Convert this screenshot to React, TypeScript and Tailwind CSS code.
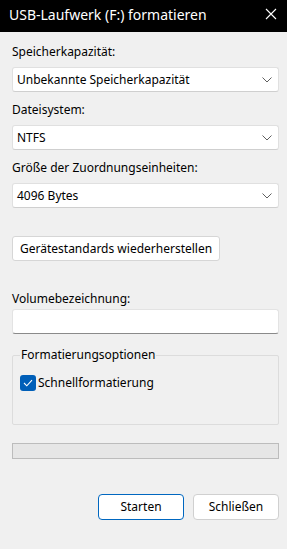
import React, { useState } from 'react';

const font = { fontFamily: '"Segoe UI", "Noto Sans", sans-serif' };

function Chevron() {
  return (
    <svg width="10" height="6" viewBox="0 0 10 6" className="text-[#5f5f5f]">
      <path d="M0.5 0.5 L5 5 L9.5 0.5" fill="none" stroke="currentColor" strokeWidth="1" />
    </svg>
  );
}

function Combo({ value }: { value: string }) {
  return (
    <div className="mt-[7px] flex h-[25px] items-center justify-between rounded-[3px] border border-[#e0e0e0] border-b-[#cfcfcf] bg-white pl-[4px] pr-[6px] text-[12px] text-black">
      <span>{value}</span>
      <Chevron />
    </div>
  );
}

export default function App() {
  const [quick, setQuick] = useState(true);

  return (
    <div className="flex h-[549px] w-[287px] flex-col bg-[#f0f0f0] text-[12px] text-black" style={font}>
      <div className="flex h-[32px] shrink-0 items-center justify-between bg-black pb-[4px] pl-[9px] pr-[10px] text-white">
        <span className="text-[14px]">USB-Laufwerk (F:) formatieren</span>
        <svg width="12" height="12" viewBox="0 0 12 12">
          <path d="M1 1 L11 11 M11 1 L1 11" stroke="white" strokeWidth="1.1" />
        </svg>
      </div>

      <div className="flex flex-1 flex-col pl-[12px] pr-[8px]">
        <div className="mt-[12px] leading-[16px]">Speicherkapazität:</div>
        <Combo value="Unbekannte Speicherkapazität" />

        <div className="mt-[10px] leading-[16px]">Dateisystem:</div>
        <Combo value="NTFS" />

        <div className="mt-[10px] leading-[16px]">Größe der Zuordnungseinheiten:</div>
        <Combo value="4096 Bytes" />

        <div className="mt-[28px]">
          <button className="h-[25px] rounded-[3px] border border-[#d6d6d6] bg-white px-[7px] text-[12px] text-black">
            Gerätestandards wiederherstellen
          </button>
        </div>

        <div className="mt-[30px] leading-[16px]">Volumebezeichnung:</div>
        <div className="mt-[2px] h-[25px] rounded-[3px] border border-[#e3e3e3] border-b-[#8a8a8a] bg-white" />

        <fieldset className="mt-[13px] h-[78px] rounded-[2px] border border-[#dcdcdc] px-[7px]">
          <legend className="px-[1px] leading-[16px]">Formatierungsoptionen</legend>
          <label className="mt-[11px] flex items-center gap-[2px]" onClick={() => setQuick(!quick)}>
            <span className="flex h-[16px] w-[16px] items-center justify-center rounded-[3px] bg-[#005fb8]">
              {quick && (
                <svg width="10" height="8" viewBox="0 0 10 8">
                  <path d="M1 4 L3.8 6.8 L9 1.2" fill="none" stroke="white" strokeWidth="1.1" />
                </svg>
              )}
            </span>
            <span className="text-[12px]">Schnellformatierung</span>
          </label>
        </fieldset>

        <div className="mt-[18px] h-[16px] border border-[#bcbcbc] bg-[#e6e6e6]" />

        <div className="mt-[35px] flex justify-end gap-[9px]">
          <button className="h-[26px] w-[86px] rounded-[4px] border border-[#0067c0] bg-white text-[12px] text-black">
            Starten
          </button>
          <button className="h-[26px] w-[86px] rounded-[4px] border border-[#d0d0d0] bg-white text-[12px] text-black">
            Schließen
          </button>
        </div>
      </div>
    </div>
  );
}
